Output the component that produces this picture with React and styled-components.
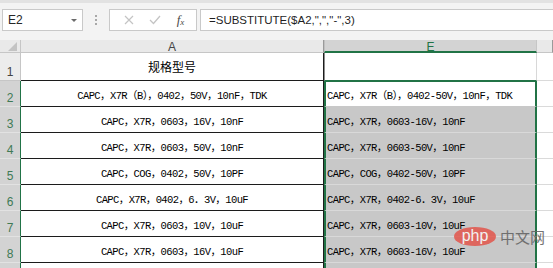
import React from "react";
import styled, { createGlobalStyle } from "styled-components";

const GlobalStyle = createGlobalStyle`
  html, body {
    margin: 0;
    padding: 0;
    background: #ffffff;
    overflow: hidden;
  }
  body {
    font-family: "Liberation Sans", "Noto Sans CJK SC", sans-serif;
  }
`;

const GREEN = "#217346";

const rows = [
  ["CAPC，X7R（B），0402，50V，10nF，TDK", "CAPC，X7R（B），0402-50V，10nF，TDK"],
  ["CAPC，X7R，0603，16V，10nF", "CAPC，X7R，0603-16V，10nF"],
  ["CAPC，X7R，0603，50V，10nF", "CAPC，X7R，0603-50V，10nF"],
  ["CAPC，COG，0402，50V，10PF", "CAPC，COG，0402-50V，10PF"],
  ["CAPC，X7R，0402，6．3V，10uF", "CAPC，X7R，0402-6．3V，10uF"],
  ["CAPC，X7R，0603，10V，10uF", "CAPC，X7R，0603-10V，10uF"],
  ["CAPC，X7R，0603，16V，10uF", "CAPC，X7R，0603-16V，10uF"],
  ["", ""],
];

function App() {
  return (
    <Page>
      <GlobalStyle />
      <Toolbar>
        <NameBox>
          <span>E2</span>
          <Caret />
        </NameBox>
        <Grip>
          <i />
          <i />
          <i />
        </Grip>
        <FxBox>
          <svg width="10" height="10" viewBox="0 0 10 10">
            <path d="M1 1 L9 9 M9 1 L1 9" stroke="#c4c4c4" strokeWidth="1.2" fill="none" />
          </svg>
          <svg width="12" height="10" viewBox="0 0 12 10">
            <path d="M1 5 L4.5 8.5 L11 1" stroke="#c4c4c4" strokeWidth="1.3" fill="none" />
          </svg>
          <FxLabel>
            f<sub>x</sub>
          </FxLabel>
        </FxBox>
        <FormulaInput>=SUBSTITUTE($A2,",","-",3)</FormulaInput>
      </Toolbar>

      <Sheet>
        <Corner>
          <svg width="9" height="9" viewBox="0 0 9 9">
            <polygon points="9,0 9,9 0,9" fill="#c3c3c3" />
          </svg>
        </Corner>
        <ColHead>A</ColHead>
        <ColHead $sel>E</ColHead>
        <ColHead $rest />

        <RowHead>1</RowHead>
        <CellA $title>规格型号</CellA>
        <CellE $top />
        <Rest />

        {rows.map((r, i) => (
          <React.Fragment key={i}>
            <RowHead $sel>{i < 7 ? i + 2 : ""}</RowHead>
            <CellA>{r[0]}</CellA>
            <CellE $active={i === 0} $sel={i > 0}>
              {r[1]}
            </CellE>
            <Rest />
          </React.Fragment>
        ))}
      </Sheet>

      <Watermark>
        <PhpBadge>php</PhpBadge>
        <span>中文网</span>
      </Watermark>
    </Page>
  );
}

const Page = styled.div`
  position: relative;
  width: 553px;
  height: 268px;
  overflow: hidden;
  background: #ffffff;
`;

const Toolbar = styled.div`
  height: 40px;
  box-sizing: border-box;
  background: #f3f3f3;
  border-top: 3px solid #e2e2e2;
  padding: 6px 0 0 2px;
  display: flex;
  align-items: flex-start;
`;

const NameBox = styled.div`
  width: 81px;
  height: 22px;
  box-sizing: border-box;
  background: #ffffff;
  border: 1px solid #c9c9c9;
  display: flex;
  align-items: center;
  justify-content: space-between;
  padding: 0 5px 0 5px;
  font-size: 12px;
  color: #262626;
`;

const Caret = styled.span`
  width: 0;
  height: 0;
  border-left: 3px solid transparent;
  border-right: 3px solid transparent;
  border-top: 3px solid #6b6b6b;
`;

const Grip = styled.div`
  width: 26px;
  height: 22px;
  display: flex;
  flex-direction: column;
  align-items: center;
  justify-content: center;
  gap: 2px;
  i {
    width: 2px;
    height: 2px;
    background: #a8a8a8;
  }
`;

const FxBox = styled.div`
  width: 88px;
  height: 22px;
  box-sizing: border-box;
  background: #ffffff;
  border: 1px solid #c9c9c9;
  display: flex;
  align-items: center;
  justify-content: space-around;
  padding: 0 4px 0 6px;
`;

const FxLabel = styled.span`
  font-family: "Liberation Serif", serif;
  font-style: italic;
  font-size: 13px;
  color: #4a4a4a;
  sub {
    font-size: 9px;
    vertical-align: -1px;
  }
`;

const FormulaInput = styled.div`
  flex: 1;
  margin-left: 3px;
  height: 22px;
  box-sizing: border-box;
  background: #ffffff;
  border: 1px solid #c9c9c9;
  border-right: none;
  display: flex;
  align-items: center;
  padding-left: 8px;
  font-size: 11.5px;
  color: #1f1f1f;
  white-space: nowrap;
`;

const Sheet = styled.div`
  display: grid;
  grid-template-columns: 21px 303px 213px 1fr;
  grid-template-rows: 13px 28px repeat(8, 26px);
`;

const Corner = styled.div`
  background: #e9e9e9;
  border-right: 1px solid #c6c6c6;
  border-bottom: 1px solid #c6c6c6;
  box-sizing: border-box;
  display: flex;
  align-items: flex-end;
  justify-content: flex-end;
  padding: 0 3px 1px 0;
`;

const ColHead = styled.div`
  box-sizing: border-box;
  background: ${(p) => (p.$sel ? "#d3d3d3" : "#e9e9e9")};
  color: ${(p) => (p.$sel ? GREEN : "#444444")};
  border-bottom: ${(p) => (p.$sel ? `2px solid ${GREEN}` : "1px solid #c6c6c6")};
  border-right: 1px solid ${(p) => (p.$sel ? "#c6c6c6" : "#9a9a9a")};
  border-left: ${(p) => (p.$sel ? "1px solid #c0c0c0" : "none")};
  font-size: 12px;
  line-height: 13px;
  text-align: center;
  padding-top: 1px;
`;

const RowHead = styled.div`
  box-sizing: border-box;
  background: ${(p) => (p.$sel ? "#d3d3d3" : "#ececec")};
  color: ${(p) => (p.$sel ? "#3f7a55" : "#444444")};
  border-right: 1px solid ${(p) => (p.$sel ? GREEN : "#c6c6c6")};
  border-bottom: 1px solid ${(p) => (p.$sel ? "#e2e2e2" : "#c6c6c6")};
  font-size: 12px;
  display: flex;
  align-items: flex-end;
  justify-content: center;
  padding-bottom: 1px;
`;

const CellA = styled.div`
  box-sizing: border-box;
  border-right: 1px solid #1c1c1c;
  border-bottom: 1px solid #1c1c1c;
  display: flex;
  align-items: center;
  justify-content: center;
  white-space: nowrap;
  padding-top: ${(p) => (p.$title ? "0" : "1px")};
  font-family: ${(p) =>
    p.$title
      ? `"Noto Sans CJK SC", sans-serif`
      : `"Liberation Mono", "Noto Sans CJK SC", monospace`};
  font-size: ${(p) => (p.$title ? "12px" : "10.5px")};
  letter-spacing: ${(p) => (p.$title ? "0" : "-0.6px")};
  color: #000000;
`;

const CellE = styled.div`
  box-sizing: border-box;
  background: ${(p) => (p.$sel ? "#c8c8c8" : "#ffffff")};
  border-left: ${(p) => (p.$top ? "1px solid #8d8d8d" : `2px solid ${GREEN}`)};
  border-right: ${(p) => (p.$top ? "1px solid #d8d8d8" : `2px solid ${GREEN}`)};
  border-top: ${(p) => (p.$active ? `1px solid ${GREEN}` : "none")};
  border-bottom: 1px solid
    ${(p) => (p.$top ? GREEN : p.$active ? "#c8c8c8" : "#d9d9d9")};
  display: flex;
  align-items: center;
  white-space: nowrap;
  overflow: hidden;
  padding: 1px 0 0 1px;
  font-family: "Liberation Mono", "Noto Sans CJK SC", monospace;
  font-size: 10.5px;
  letter-spacing: -0.6px;
  color: #000000;
`;

const Rest = styled.div`
  box-sizing: border-box;
  border-bottom: 1px solid #dadada;
`;

const Watermark = styled.div`
  position: absolute;
  left: 454px;
  top: 226px;
  display: flex;
  align-items: center;
  gap: 4px;
  font-family: "Noto Sans CJK SC", sans-serif;
  font-size: 15px;
  color: #666666;
  opacity: 0.9;
`;

const PhpBadge = styled.span`
  width: 42px;
  height: 19px;
  border-radius: 50%;
  background: #e64a3f;
  color: #ffffff;
  font-family: "Liberation Sans", sans-serif;
  font-size: 16px;
  line-height: 17px;
  text-align: center;
  opacity: 0.85;
`;

export default App;
